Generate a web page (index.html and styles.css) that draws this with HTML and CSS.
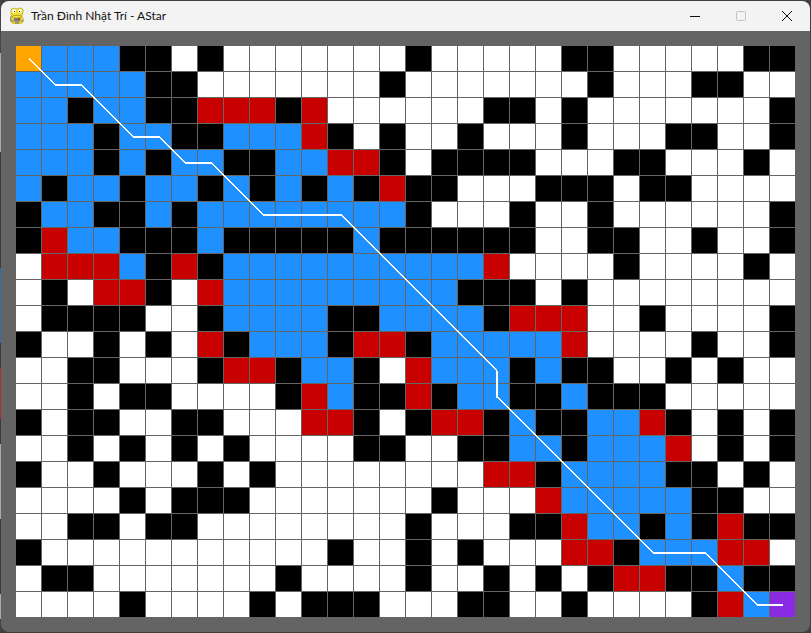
FILE: index.html
```html
<!DOCTYPE html>
<html lang="vi">
<head>
<meta charset="utf-8">
<title>Trần Đình Nhật Trí - AStar</title>
<link rel="stylesheet" href="styles.css">
</head>
<body>
<main class="window">
  <header class="titlebar">
    <svg class="app-icon" viewBox="0 0 16 18" aria-hidden="true">
      <path d="M3 8 1 10v4l3 3h8l3-3-1-4-3-3z" fill="#a09c62"/>
      <path d="M2 10l3-1 1 3-3 2zM12 9l2 1v3l-3 1z" fill="#e3d32e"/>
      <path d="M2 4Q2 1 5 1l3 1 3-1q4 0 3 4l-1 4-3 2H5L2 8z" fill="#f0de2c" stroke="#a89a28" stroke-width=".6"/>
      <circle cx="5" cy="4" r="2" fill="#fffbe0"/><circle cx="11" cy="4" r="2" fill="#fffbe0"/>
      <path d="M5 4h1v1H5zM10 4h1v1h-1z" fill="#333"/>
      <path d="M4 8.5h8" stroke="#a3952a" stroke-width=".7"/>
      <path d="M5 11h6v3H5z" fill="#777c83"/><path d="M9 11h2v2H9z" fill="#b34a42"/>
      <path d="M3 15l3-1v3H3zM10 14l4 1-1 2h-3z" fill="#e0d02c"/>
    </svg>
    <h1 class="title">Trần Đình Nhật Trí - AStar</h1>
    <button class="control" type="button" aria-label="Minimize">
      <svg viewBox="0 0 12 12"><path d="M1 6.5h10"/></svg>
    </button>
    <button class="control" type="button" aria-label="Maximize" disabled>
      <svg viewBox="0 0 12 12"><rect x="1.5" y="1.5" width="9" height="9" rx="1"/></svg>
    </button>
    <button class="control" type="button" aria-label="Close">
      <svg viewBox="0 0 12 12"><path d="M1 1l10 10M11 1 1 11"/></svg>
    </button>
  </header>
  <section class="canvas">
    <div class="board">
      <div class="cells" id="cells"></div>
      <svg class="route" viewBox="0 0 779 571" aria-hidden="true">
        <path class="diagonal" d="M13 12.5 39 38.5M65 38.5 117 90.5M143 90.5 169 116.5M195 116.5 247 168.5M325 168.5 481 324.5M481 350.5 637 506.5M689 506.5 741 558.5"/>
        <path class="straight" d="M39 39H66M117 91H144M169 117H196M247 169H326M481 325V352M637 507H690M741 559H767"/>
      </svg>
    </div>
  </section>
</main>
<script src="board.js"></script>
</body>
</html>
```
FILE: styles.css
```css
* { box-sizing: border-box; }

body {
  margin: 0;
  padding: 1px;
  background: linear-gradient(#4a4648 0 53px, #aaa 53px 152px, #3c3a3c 152px 268px, #2f6ea8 268px 343px, #3c3a3c 343px 368px, #a33230 368px 419px, #3c3a3c 419px 444px, #aaa 444px 519px, #3c3a3c 519px 594px, #aaa 594px 619px, #444 619px) 0 0 / 1px 100% no-repeat, #3f3f40;
}

.window {
  overflow: hidden;
  border-radius: 8px;
  background: #646464;
}

.titlebar {
  display: flex;
  align-items: center;
  height: 30px;
  padding-left: 8px;
  background: #f3f3f3;
}

.app-icon {
  width: 16px;
  height: 18px;
}

.title {
  flex: 1;
  margin: 0 0 0 6px;
  color: #111;
  font: 400 12px/16px Lato, "Noto Sans", sans-serif;
}

.control {
  display: grid;
  place-items: center;
  width: 46px;
  height: 30px;
  padding: 0;
  border: 0;
  background: transparent;
}

.control svg {
  width: 12px;
  height: 12px;
  fill: none;
  stroke: #111;
}

.control:disabled svg { stroke: #c3c3c3; }

.canvas { padding: 15px; }

.board { position: relative; }

.cells {
  display: grid;
  grid-template-columns: repeat(30, 1fr);
  gap: 1px;
}

.cell {
  aspect-ratio: 1;
  background: #fff;
}

.wall { background: #000; }
.closed { background: #1e90ff; }
.open { background: #c80000; }
.start { background: #ffa500; }
.goal { background: #8a2be2; }

.route {
  position: absolute;
  inset: 0;
  width: 100%;
  height: 100%;
  fill: none;
  stroke: #fff;
  shape-rendering: crispEdges;
}

.diagonal { stroke-width: 1.4; }
.straight { stroke-width: 2; }
```
FILE: board.js
```js
const kinds = { W: "free", K: "wall", B: "closed", R: "open", O: "start", P: "goal" };

const rows = [
  "OBBBKKWKWW WWWWWKWWWW WKKWWWWWKK",
  "BBBBBKKWWW WWWWKWWWWW WWKWWWKKWW",
  "BBKBBKKRRR KRWWWWWWKK WKWWWWWWWK",
  "BBBKBBKKBB BRKWKWWKWW WKWWWKKWWK",
  "BBBKBKBBKK BBRRKWKKKK WWWKKWWWKW",
  "BKBBKBBKBK BKBKRKKWWW KKKWKKWWWW",
  "KBBKKBKBBB BBBBBKWWWK WWKWWWWWWK",
  "KRBBKKKBKK KKKBKKKKKK WWKKWWKWWK",
  "WRRRBKRKBB BBBBBBBBRW WWWKWWWWKW",
  "WKWRRKWRBB BBBBBBBKKK WKWWWWWWWW",
  "WKKKKWWKBB BBKKBBBBKR RRWWKWWWWK",
  "KWWKWKWRKB BBKRRKBBBB BRWWWWKWWK",
  "WWKKWWWKRR KBBKWRBBBK BKKWWKWKWW",
  "WWKWKKWWWW KRBKKRKBBK KBKKKWWWWW",
  "KWKKWWKKWW WRRKWKRRKB KKBBRKWKWK",
  "WWKWKWKWKW WWWKKWWKKB BKBBBRWKWK",
  "KWWKWWWKWK WWWWWWWWRR KBBBBKKWKW",
  "WWWWKWKKKW WWWWWWKWWW RBBBBBKKWW",
  "WWKKWKKWWW WWWWWKWWWK KRBBKBKRKK",
  "KWWWWWWWWW WWKWWKWKWW WRRKBBBRRW",
  "WKKWWWWWWW KWWWWKWWKW KWKRRKKBKK",
  "WWWWKWWWWK WKKKWWWKKW WKWWWWKRBP"
];

const cells = document.getElementById("cells");
for (const row of rows) {
  for (const key of row.replaceAll(" ", "")) {
    const cell = document.createElement("div");
    cell.className = "cell " + kinds[key];
    cells.append(cell);
  }
}
```
